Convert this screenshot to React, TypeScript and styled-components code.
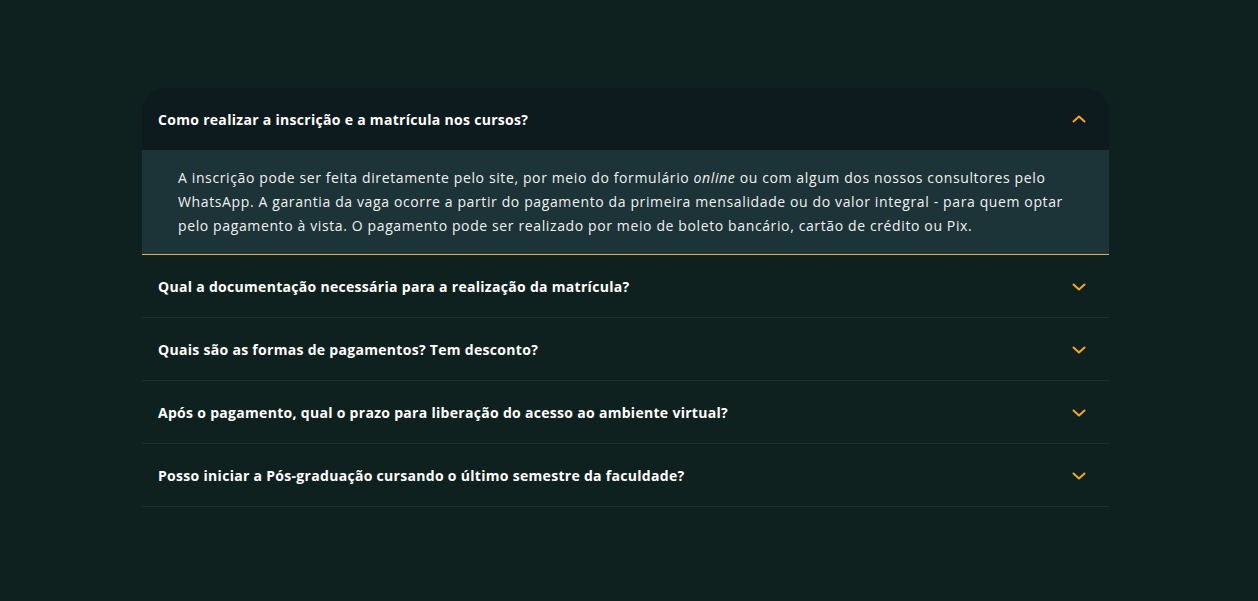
import { useState } from "react";
import styled, { createGlobalStyle } from "styled-components";

const GlobalStyle = createGlobalStyle`
  html, body {
    margin: 0;
    padding: 0;
    background: #0f211f;
  }
  body {
    font-family: "Open Sans", "Liberation Sans", sans-serif;
  }
`;

const Page = styled.main`
  min-height: 601px;
  box-sizing: border-box;
  padding: 88px 149px 0 142px;
`;

const List = styled.div`
  display: flex;
  flex-direction: column;
`;

const Item = styled.div<{ $open: boolean; $first: boolean }>`
  border-bottom: 1px solid ${({ $open }) => ($open ? "#f2a93b" : "#1c302f")};
  border-radius: ${({ $first }) => ($first ? "24px 24px 0 0" : "0")};
  overflow: hidden;
`;

const Header = styled.button<{ $open: boolean }>`
  width: 100%;
  height: 62px;
  display: flex;
  align-items: center;
  justify-content: space-between;
  padding: 0 22px 0 16px;
  border: none;
  background: ${({ $open }) => ($open ? "#0d1b1e" : "transparent")};
  color: #ffffff;
  font-family: inherit;
  font-size: 14px;
  font-weight: 700;
  letter-spacing: 0.3px;
  text-align: left;
  cursor: pointer;
`;

const Chevron = styled.svg<{ $open: boolean }>`
  width: 16px;
  height: 16px;
  margin-top: ${({ $open }) => ($open ? "-1px" : "2px")};
  transform: rotate(${({ $open }) => ($open ? "180deg" : "0deg")});
`;

const Body = styled.div`
  background: #1c3337;
  color: #f1f1f1;
  font-size: 14px;
  line-height: 24px;
  letter-spacing: 0.62px;
  padding: 16px 40px 16px 36px;

  em {
    font-style: italic;
  }
`;

type Faq = {
  question: string;
  answer?: React.ReactNode;
};

const faqs: Faq[] = [
  {
    question: "Como realizar a inscrição e a matrícula nos cursos?",
    answer: (
      <>
        A inscrição pode ser feita diretamente pelo site, por meio do formulário <em>online</em> ou
        com algum dos nossos consultores pelo WhatsApp. A garantia da vaga ocorre a partir do
        pagamento da primeira mensalidade ou do valor integral - para quem optar pelo pagamento à
        vista. O pagamento pode ser realizado por meio de boleto bancário, cartão de crédito ou Pix.
      </>
    ),
  },
  { question: "Qual a documentação necessária para a realização da matrícula?" },
  { question: "Quais são as formas de pagamentos? Tem desconto?" },
  { question: "Após o pagamento, qual o prazo para liberação do acesso ao ambiente virtual?" },
  { question: "Posso iniciar a Pós-graduação cursando o último semestre da faculdade?" },
];

export default function App() {
  const [openIndex, setOpenIndex] = useState<number | null>(0);

  return (
    <>
      <GlobalStyle />
      <Page>
        <List>
          {faqs.map((faq, i) => {
            const open = openIndex === i;
            return (
              <Item key={faq.question} $open={open} $first={i === 0}>
                <Header $open={open} onClick={() => setOpenIndex(open ? null : i)}>
                  {faq.question}
                  <Chevron $open={open} viewBox="0 0 16 16" fill="none">
                    <path
                      d="M2.5 5.5 8 10.5l5.5-5"
                      stroke="#f5a623"
                      strokeWidth="2"
                      strokeLinecap="round"
                      strokeLinejoin="round"
                    />
                  </Chevron>
                </Header>
                {open && faq.answer && <Body>{faq.answer}</Body>}
              </Item>
            );
          })}
        </List>
      </Page>
    </>
  );
}
